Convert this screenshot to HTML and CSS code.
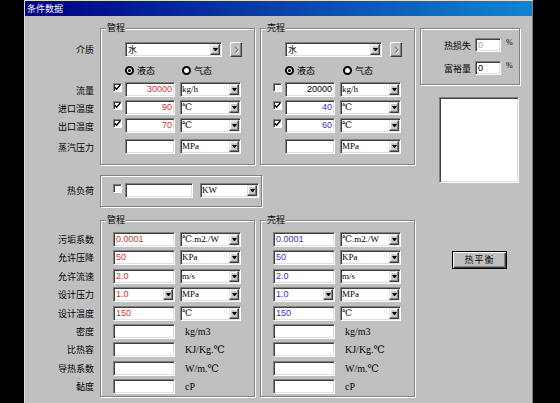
FILE: index.html
```html
<!DOCTYPE html>
<html lang="zh-CN">
<head>
<meta charset="utf-8">
<title>条件数据</title>
<link rel="stylesheet" href="styles.css">
</head>
<body>
<div class="window">
  <div class="titlebar">条件数据</div>
  <div class="content">
    <div class="main">
      <!-- upper -->
      <div class="section upper">
        <div class="labels">
          <div class="lbl r-combo">介质</div>
          <div class="lbl r-radio"></div>
          <div class="lbl r-d r-d1">流量</div>
          <div class="lbl r-d">进口温度</div>
          <div class="lbl r-d">出口温度</div>
          <div class="lbl r-d r-d4">蒸汽压力</div>
        </div>
        <div class="group g155">
          <div class="legend">管程</div>
          <div class="gbody gb-upper">
            <div class="row r-combo">
              <span class="slot"></span>
              <div class="field combo w97"><span class="txt">水</span><span class="dd"></span></div>
              <span class="more"><svg width="5" height="8" viewBox="0 0 5 8"><polyline points="1,1 4,4 1,7" fill="none" stroke="#fff" stroke-width="1.3" transform="translate(0.6,0.6)"/><polyline points="1,1 4,4 1,7" fill="none" stroke="#808080" stroke-width="1.3"/></svg></span>
            </div>
            <div class="row r-radio">
              <span class="slot"></span>
              <span class="radio first"><span class="rad on"></span>液态</span>
              <span class="radio"><span class="rad"></span>气态</span>
            </div>
            <div class="row r-d r-d1">
              <span class="slot"><span class="chk"><svg width="7" height="7" viewBox="0 0 7 7"><path d="M0.8 3.2 L2.6 5.2 L6.2 1" fill="none" stroke="#000" stroke-width="1.4"/></svg></span></span>
              <div class="field num w50"><span class="v red">30000</span></div>
              <div class="field combo w61 ml5"><span class="unit">kg/h</span><span class="dd"></span></div>
            </div>
            <div class="row r-d">
              <span class="slot"><span class="chk"><svg width="7" height="7" viewBox="0 0 7 7"><path d="M0.8 3.2 L2.6 5.2 L6.2 1" fill="none" stroke="#000" stroke-width="1.4"/></svg></span></span>
              <div class="field num w50"><span class="v red">90</span></div>
              <div class="field combo w61 ml5"><span class="unit">℃</span><span class="dd"></span></div>
            </div>
            <div class="row r-d">
              <span class="slot"><span class="chk"><svg width="7" height="7" viewBox="0 0 7 7"><path d="M0.8 3.2 L2.6 5.2 L6.2 1" fill="none" stroke="#000" stroke-width="1.4"/></svg></span></span>
              <div class="field num w50"><span class="v red">70</span></div>
              <div class="field combo w61 ml5"><span class="unit">℃</span><span class="dd"></span></div>
            </div>
            <div class="row r-d r-d4">
              <span class="slot"></span>
              <div class="field num w50"></div>
              <div class="field combo w61 ml5"><span class="unit">MPa</span><span class="dd"></span></div>
            </div>
          </div>
        </div>
        <div class="group g155">
          <div class="legend">壳程</div>
          <div class="gbody gb-upper">
            <div class="row r-combo">
              <span class="slot"></span>
              <div class="field combo w97"><span class="txt">水</span><span class="dd"></span></div>
              <span class="more"><svg width="5" height="8" viewBox="0 0 5 8"><polyline points="1,1 4,4 1,7" fill="none" stroke="#fff" stroke-width="1.3" transform="translate(0.6,0.6)"/><polyline points="1,1 4,4 1,7" fill="none" stroke="#808080" stroke-width="1.3"/></svg></span>
            </div>
            <div class="row r-radio">
              <span class="slot"></span>
              <span class="radio first2"><span class="rad on"></span>液态</span>
              <span class="radio"><span class="rad"></span>气态</span>
            </div>
            <div class="row r-d r-d1">
              <span class="slot"><span class="chk"></span></span>
              <div class="field num w50"><span class="v">20000</span></div>
              <div class="field combo w61 ml5"><span class="unit">kg/h</span><span class="dd"></span></div>
            </div>
            <div class="row r-d">
              <span class="slot"><span class="chk"><svg width="7" height="7" viewBox="0 0 7 7"><path d="M0.8 3.2 L2.6 5.2 L6.2 1" fill="none" stroke="#000" stroke-width="1.4"/></svg></span></span>
              <div class="field num w50"><span class="v blue">40</span></div>
              <div class="field combo w61 ml5"><span class="unit">℃</span><span class="dd"></span></div>
            </div>
            <div class="row r-d">
              <span class="slot"><span class="chk"><svg width="7" height="7" viewBox="0 0 7 7"><path d="M0.8 3.2 L2.6 5.2 L6.2 1" fill="none" stroke="#000" stroke-width="1.4"/></svg></span></span>
              <div class="field num w50"><span class="v blue">60</span></div>
              <div class="field combo w61 ml5"><span class="unit">℃</span><span class="dd"></span></div>
            </div>
            <div class="row r-d r-d4">
              <span class="slot"></span>
              <div class="field num w50"></div>
              <div class="field combo w61 ml5"><span class="unit">MPa</span><span class="dd"></span></div>
            </div>
          </div>
        </div>
      </div>

      <!-- heat load -->
      <div class="section heat">
        <div class="labels">
          <div class="lbl">热负荷</div>
        </div>
        <div class="group g162">
          <div class="gbody gb-heat">
            <div class="row r-h">
              <span class="slot"><span class="chk"></span></span>
              <div class="field w68"></div>
              <div class="field combo w59 ml7"><span class="unit">KW</span><span class="dd"></span></div>
            </div>
          </div>
        </div>
      </div>

      <!-- lower -->
      <div class="section lower">
        <div class="labels">
          <div class="lbl r-l">污垢系数</div>
          <div class="lbl r-l">允许压降</div>
          <div class="lbl r-l">允许流速</div>
          <div class="lbl r-l">设计压力</div>
          <div class="lbl r-l">设计温度</div>
          <div class="lbl r-l">密度</div>
          <div class="lbl r-l">比热容</div>
          <div class="lbl r-l">导热系数</div>
          <div class="lbl r-l">黏度</div>
        </div>
        <div class="group g155">
          <div class="legend">管程</div>
          <div class="gbody gb-lower">
            <div class="row r-l"><div class="field w62"><span class="v red">0.0001</span></div><div class="field combo w61 ml5"><span class="unit">℃.m2./W</span><span class="dd"></span></div></div>
            <div class="row r-l"><div class="field w62"><span class="v red">50</span></div><div class="field combo w61 ml5"><span class="unit">KPa</span><span class="dd"></span></div></div>
            <div class="row r-l"><div class="field w62"><span class="v red">2.0</span></div><div class="field combo w61 ml5"><span class="unit">m/s</span><span class="dd"></span></div></div>
            <div class="row r-l"><div class="field combo w62"><span class="v red">1.0</span><span class="dd"></span></div><div class="field combo w61 ml5"><span class="unit">MPa</span><span class="dd"></span></div></div>
            <div class="row r-l"><div class="field w62"><span class="v red">150</span></div><div class="field combo w61 ml5"><span class="unit">℃</span><span class="dd"></span></div></div>
            <div class="row r-l"><div class="field w62"></div><span class="utext">kg/m3</span></div>
            <div class="row r-l"><div class="field w62"></div><span class="utext">KJ/Kg.℃</span></div>
            <div class="row r-l"><div class="field w62"></div><span class="utext">W/m.℃</span></div>
            <div class="row r-l"><div class="field w62"></div><span class="utext">cP</span></div>
          </div>
        </div>
        <div class="group g155">
          <div class="legend">壳程</div>
          <div class="gbody gb-lower">
            <div class="row r-l"><div class="field w62"><span class="v blue">0.0001</span></div><div class="field combo w61 ml5"><span class="unit">℃.m2./W</span><span class="dd"></span></div></div>
            <div class="row r-l"><div class="field w62"><span class="v blue">50</span></div><div class="field combo w61 ml5"><span class="unit">KPa</span><span class="dd"></span></div></div>
            <div class="row r-l"><div class="field w62"><span class="v blue">2.0</span></div><div class="field combo w61 ml5"><span class="unit">m/s</span><span class="dd"></span></div></div>
            <div class="row r-l"><div class="field combo w62"><span class="v blue">1.0</span><span class="dd"></span></div><div class="field combo w61 ml5"><span class="unit">MPa</span><span class="dd"></span></div></div>
            <div class="row r-l"><div class="field w62"><span class="v blue">150</span></div><div class="field combo w61 ml5"><span class="unit">℃</span><span class="dd"></span></div></div>
            <div class="row r-l"><div class="field w62"></div><span class="utext">kg/m3</span></div>
            <div class="row r-l"><div class="field w62"></div><span class="utext">KJ/Kg.℃</span></div>
            <div class="row r-l"><div class="field w62"></div><span class="utext">W/m.℃</span></div>
            <div class="row r-l"><div class="field w62"></div><span class="utext">cP</span></div>
          </div>
        </div>
      </div>
    </div>

    <!-- right column -->
    <div class="right">
      <div class="group">
        <div class="gbody gb-right">
          <div class="rrow"><span class="rlbl">热损失</span><div class="field small"><span class="v gray">0</span></div><span class="pct">%</span></div>
          <div class="rrow"><span class="rlbl">富裕量</span><div class="field small"><span class="v">0</span></div><span class="pct">%</span></div>
        </div>
      </div>
      <div class="field whitebox"></div>
      <div class="button">热平衡</div>
    </div>
  </div>
</div>
</body>
</html>
```
FILE: styles.css
```css
* { box-sizing: border-box; }
html, body { margin: 0; padding: 0; background: #000; }
body {
  width: 560px; height: 403px; overflow: hidden;
  font-family: "Noto Sans CJK SC", "Noto Sans", sans-serif;
  font-size: 9px; color: #000;
}
.window {
  margin-left: 24px; width: 509px; height: 403px;
  background: #c0c0c0; padding-top: 1px;
  box-shadow: inset 1px 1px 0 #dfdfdf, inset -1px 0 0 #808080;
}
.titlebar {
  margin: 0 1px; height: 15px; line-height: 15px; padding-left: 2px;
  color: #fff; font-size: 9px;
  background: linear-gradient(to right, #000080, #1084d0);
}
.content { display: flex; }
.main { width: 391px; flex: none; }
.section { display: flex; }
.upper { padding-top: 12px; }
.heat { margin-top: 10px; }
.lower { margin-top: 13px; }

.labels { width: 76px; padding-right: 6px; text-align: right; flex: none; }
.labels .lbl { height: 15px; line-height: 15px; white-space: nowrap; }
.upper .labels { padding-top: 14px; }
.heat .labels { padding-top: 8px; }
.lower .labels { padding-top: 12px; }

.group {
  border: 1px solid #808080;
  box-shadow: 1px 1px 0 #fff, inset 1px 1px 0 #fff;
  flex: none;
}
.g155 { width: 155px; }
.g155 + .g155 { margin-left: 5px; }
.g162 { width: 162px; }
.legend {
  width: fit-content; height: 12px; line-height: 12px;
  margin: -7px 0 -5px 5px; padding: 0 1px;
  background: #c0c0c0;
}
.gb-upper { padding: 13px 0 10px 12px; }
.gb-heat { padding: 7px 0 8px 12px; }
.gb-lower { padding: 11px 0 2px 12px; }
.gb-right { padding: 9px 8px 9px 0; }

.row { display: flex; align-items: flex-start; }
.r-combo { height: 15px; }
.r-radio { height: 14px; margin-top: 6px; align-items: center; }
.r-d { height: 15px; margin-top: 3px; }
.r-d1 { margin-top: 5px; }
.r-d4 { margin-top: 6px; }
.r-h { height: 15px; }
.r-l { height: 15px; }
.r-l + .r-l { margin-top: 3.375px; }

.slot { width: 12px; flex: none; }

.field {
  background: #fff; height: 15px; flex: none;
  border: 1px solid; border-color: #808080 #fff #fff #808080;
  box-shadow: inset 1px 1px 0 #404040, inset -1px -1px 0 #dfdfdf;
  display: flex; align-items: center; overflow: hidden;
}
.w97 { width: 97px; }
.w50 { width: 50px; }
.w61 { width: 61px; }
.w62 { width: 62px; }
.w68 { width: 68px; }
.w59 { width: 59px; }
.ml5 { margin-left: 5px; }
.ml7 { margin-left: 7px; }
.num { justify-content: flex-end; }

.txt { padding-left: 2px; line-height: 11px; }
.v {
  font-family: "Liberation Sans", Arial, sans-serif; font-size: 9px;
  line-height: 11px; padding: 0 2px; white-space: nowrap;
}
.red { color: #cc3333; }
.blue { color: #3333cc; }
.gray { color: #a0a0a0; }
.unit, .utext, .pct {
  font-family: "Liberation Serif", "DejaVu Serif", "Noto Sans CJK SC", serif;
  font-size: 10px; white-space: nowrap;
}
.unit { padding-left: 1px; line-height: 11px; font-size: 9px; }
.utext { margin-left: 10px; line-height: 15px; }

.dd {
  width: 10px; height: 11px; margin: 0 1px 0 auto; flex: none;
  background: #c8c8c8;
  border: 1px solid; border-color: #dfdfdf #404040 #404040 #dfdfdf;
  box-shadow: inset -1px -1px 0 #808080, inset 1px 1px 0 #fff;
  display: flex; align-items: center; justify-content: center;
}
.dd::after {
  content: ""; width: 1px; height: 0;
  border-top: 3px solid #000;
  border-left: 2px solid transparent; border-right: 2px solid transparent;
}

.more {
  width: 12px; height: 15px; margin-left: 8px; flex: none;
  background: #c0c0c0;
  border: 1px solid; border-color: #fff #404040 #404040 #fff;
  box-shadow: inset -1px -1px 0 #808080;
  display: flex; align-items: center; justify-content: center;
}
.more svg { display: block; }

.radio { display: flex; align-items: center; gap: 3px; white-space: nowrap; }
.radio.first { width: 57px; }
.radio.first2 { width: 58px; }
.rad {
  width: 9px; height: 9px; border-radius: 50%; flex: none;
  background: #fff; border: 2px solid #000;
  display: flex; align-items: center; justify-content: center;
}
.rad.on::after {
  content: ""; width: 3px; height: 3px; border-radius: 50%; background: #000;
}

.chk {
  display: block; width: 9px; height: 9px; margin-top: 1px;
  background: #fff;
  border: 1px solid; border-color: #808080 #fff #fff #808080;
  box-shadow: inset 1px 1px 0 #404040;
}
.chk svg { display: block; }

.right { width: 100px; margin-left: 5px; padding-top: 12px; flex: none; }
.rrow { display: flex; align-items: center; justify-content: flex-end; height: 14px; }
.rrow + .rrow { margin-top: 9px; }
.rlbl { margin-right: 4px; white-space: nowrap; }
.field.small { width: 26px; height: 14px; }
.pct { width: 5px; margin-left: 5px; align-self: flex-start; line-height: 10px; font-size: 8px; }
.whitebox { width: 80px; height: 86px; margin: 12px 0 0 19px; }
.button {
  width: 55px; height: 18px; margin: 68px 0 0 32px;
  border: 1px solid #000; background: #c0c0c0;
  box-shadow: inset 1px 1px 0 #fff, inset -1px -1px 0 #404040, inset -2px -2px 0 #808080;
  text-align: center; line-height: 16px; letter-spacing: 1px;
}
```
